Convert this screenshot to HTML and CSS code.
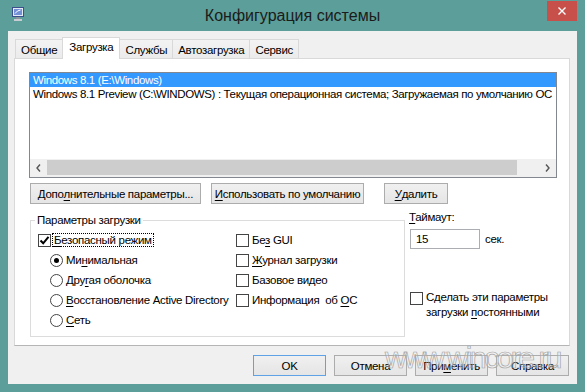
FILE: index.html
```html
<!DOCTYPE html>
<html lang="ru">
<head>
  <meta charset="UTF-8">
  <title>Конфигурация системы</title>
  <link rel="stylesheet" href="styles.css">
</head>
<body>

  <div class="window">
    <div class="titlebar">
      <div class="titlebar-left">
        <svg class="app-icon" viewBox="0 0 12 15">
          <rect x="0.5" y="0.5" width="11" height="9" fill="#e4eaf6" stroke="#3a4f8c"/>
          <rect x="2" y="2" width="8" height="6" fill="#7390d6"/>
          <path d="M3 6.5 L5.5 4 L8.5 3" stroke="#fff" fill="none"/>
          <rect x="4" y="10" width="4" height="2" fill="#8c939c"/>
          <rect x="2" y="12" width="8" height="2" fill="#c9cdd3"/>
        </svg>
      </div>
      <div class="title">Конфигурация системы</div>
      <div class="titlebar-right">
        <div class="close-btn">
          <svg width="8" height="8" viewBox="0 0 8 8">
            <path d="M0.5 0.5 L7.5 7.5 M7.5 0.5 L0.5 7.5" stroke="#fff" stroke-width="1.4"/>
          </svg>
        </div>
      </div>
    </div>

    <div class="client">
      <div class="tabs">
        <div class="tab">Общие</div>
        <div class="tab active">Загрузка</div>
        <div class="tab">Службы</div>
        <div class="tab">Автозагрузка</div>
        <div class="tab">Сервис</div>
      </div>

      <div class="panel">
        <div class="listbox">
          <div class="list-rows">
            <div class="list-row selected">Windows 8.1 (E:\Windows)</div>
            <div class="list-row">Windows 8.1 Preview (C:\WINDOWS) : Текущая операционная система; Загружаемая по умолчанию ОС</div>
          </div>
          <div class="hscroll">
            <div class="scroll-arrow">
              <svg width="5" height="8" viewBox="0 0 5 8"><path d="M4 0.5 L1 4 L4 7.5" stroke="#555" stroke-width="1.4" fill="none"/></svg>
            </div>
            <div class="scroll-thumb"></div>
            <div class="scroll-track"></div>
            <div class="scroll-arrow">
              <svg width="5" height="8" viewBox="0 0 5 8"><path d="M1 0.5 L4 4 L1 7.5" stroke="#555" stroke-width="1.4" fill="none"/></svg>
            </div>
          </div>
        </div>

        <div class="btn-row">
          <div class="btn btn-advanced">Допо<u>л</u>нительные параметры...</div>
          <div class="btn btn-default"><u>И</u>спользовать по умолчанию</div>
          <div class="btn btn-delete"><u>У</u>далить</div>
        </div>

        <div class="lower">
          <fieldset class="group">
            <legend>Параметры загрузки</legend>
            <div class="group-grid">
              <div class="opt">
                <span class="chk checked">
                  <svg width="11" height="11" viewBox="0 0 11 11"><path d="M1.5 5.5 L4.2 8.3 L9.5 1.8" stroke="#000" stroke-width="2" fill="none"/></svg>
                </span>
                <span class="opt-text focused"><u>Б</u>езопасный режим</span>
              </div>
              <div class="opt">
                <span class="chk"></span>
                <span class="opt-text">Бе<u>з</u> GUI</span>
              </div>
              <div class="opt indent">
                <span class="radio on"></span>
                <span class="opt-text">Ми<u>н</u>имальная</span>
              </div>
              <div class="opt">
                <span class="chk"></span>
                <span class="opt-text"><u>Ж</u>урнал загрузки</span>
              </div>
              <div class="opt indent">
                <span class="radio"></span>
                <span class="opt-text">Дру<u>г</u>ая оболочка</span>
              </div>
              <div class="opt">
                <span class="chk"></span>
                <span class="opt-text">Базовое видео</span>
              </div>
              <div class="opt indent">
                <span class="radio"></span>
                <span class="opt-text"><u>В</u>осстановление Active Directory</span>
              </div>
              <div class="opt">
                <span class="chk"></span>
                <span class="opt-text">Информация&nbsp; об <u>О</u>С</span>
              </div>
              <div class="opt indent">
                <span class="radio"></span>
                <span class="opt-text"><u>С</u>еть</span>
              </div>
            </div>
          </fieldset>

          <div class="side">
            <div class="side-label"><u>Т</u>аймаут:</div>
            <div class="timeout-row">
              <div class="input">15</div>
              <div class="unit">сек.</div>
            </div>
            <div class="persist">
              <span class="chk"></span>
              <div class="persist-text">Сделать эти параметры<br>загрузки <u>п</u>остоянными</div>
            </div>
          </div>
        </div>
      </div>

      <div class="footer">
        <div class="btn default">OK</div>
        <div class="btn">Отмена</div>
        <div class="btn">При<u>м</u>енить</div>
        <div class="btn">Справка</div>
      </div>
    </div>

    <div class="watermark">www.wincore.ru</div>
  </div>

</body>
</html>
```

FILE: styles.css
```css
* {
  box-sizing: border-box;
}

body {
  margin: 0;
  background: #5c9e99;
  font-family: "Liberation Sans", Arial, sans-serif;
  font-size: 11.5px;
  letter-spacing: -0.3px;
  color: #000;
}

u {
  text-decoration-thickness: 1px;
  text-underline-offset: 2px;
}

.window {
  position: relative;
  width: 585px;
  height: 392px;
  background: #5c9e99;
}

/* заголовок окна */
.titlebar {
  height: 31px;
  display: grid;
  grid-template-columns: 1fr auto 1fr;
}

.titlebar-left {
  padding: 7px 0 0 12px;
}

.app-icon {
  display: block;
  width: 12px;
  height: 15px;
}

.title {
  font-size: 16px;
  letter-spacing: 0;
  line-height: 31px;
  color: #1b1b1b;
}

.titlebar-right {
  display: flex;
  justify-content: flex-end;
  align-items: flex-start;
  padding: 1px 8px 0 0;
}

.close-btn {
  width: 30px;
  height: 20px;
  background: #c7504b;
  display: flex;
  align-items: center;
  justify-content: center;
}

.client {
  margin: 0 8px;
  height: 353px;
  background: #f0f0f0;
  padding: 6px 7px 0 6px;
}

/* вкладки */
.tabs {
  display: flex;
  align-items: flex-start;
  height: 22px;
  padding-left: 1px;
  position: relative;
  z-index: 1;
}

.tab {
  height: 19px;
  margin-top: 2px;
  margin-left: -1px;
  padding: 3px 5px 0;
  line-height: 15px;
  border: 1px solid #d9d9d9;
  border-bottom: none;
  background: linear-gradient(#f3f3f3, #ebebeb);
}

.tab:first-child {
  margin-left: 0;
}

.tab.active {
  height: 22px;
  margin-top: 0;
  padding: 2px 6px 0;
  background: #fff;
  position: relative;
  z-index: 2;
}

.panel {
  margin-top: -1px;
  height: 288px;
  background: #fff;
  border: 1px solid #d9d9d9;
  border-bottom-color: #b5b5b5;
  padding: 13px 12px 0 14px;
}

/* список ОС */
.listbox {
  height: 106px;
  border: 1px solid #828790;
  display: flex;
  flex-direction: column;
}

.list-rows {
  flex: 1;
  overflow: hidden;
}

.list-row {
  height: 14px;
  line-height: 14px;
  padding-left: 3px;
  letter-spacing: -0.36px;
  white-space: nowrap;
}

.list-row.selected {
  background: #3399ff;
  color: #fff;
}

.hscroll {
  height: 18px;
  display: flex;
  background: #f0f0f0;
}

.scroll-arrow {
  width: 17px;
  display: flex;
  align-items: center;
  justify-content: center;
}

.scroll-thumb {
  width: 470px;
  margin: 1px 0 2px;
  background: #cdcdcd;
}

.scroll-track {
  flex: 1;
}

/* кнопки */
.btn {
  height: 21px;
  border: 1px solid #acacac;
  background: linear-gradient(#f0f0f0, #e5e5e5);
  display: flex;
  align-items: center;
  justify-content: center;
  white-space: nowrap;
}

.btn.default {
  border-color: #5fa3e6;
}

.btn-row {
  display: flex;
  margin-top: 5px;
  padding-left: 1px;
}

.btn-advanced {
  width: 171px;
}

.btn-default {
  width: 153px;
  margin-left: 10px;
}

.btn-delete {
  width: 64px;
  margin-left: 20px;
}

/* параметры загрузки */
.lower {
  display: flex;
  align-items: flex-start;
  margin-top: 6px;
  padding-left: 1px;
}

.group {
  margin: 3px 0 0;
  width: 375px;
  min-width: 0;
  border: 1px solid #dcdcdc;
  padding: 2px 6px 6px 7px;
}

.group legend {
  padding: 0 2px;
  margin-left: -3px;
  line-height: 15px;
}

.group-grid {
  display: grid;
  grid-template-columns: 198px 1fr;
  grid-auto-rows: 20px;
}

.opt {
  display: flex;
  align-items: center;
  white-space: nowrap;
}

.opt.indent {
  padding-left: 12px;
}

.chk,
.radio {
  flex: none;
  width: 13px;
  height: 13px;
  border: 1px solid #444;
  background: #fff;
  margin-right: 1px;
  display: flex;
  align-items: center;
  justify-content: center;
}

.radio {
  border-radius: 50%;
}

.radio.on::after {
  content: "";
  width: 5px;
  height: 5px;
  border-radius: 50%;
  background: #000;
}

.opt-text {
  line-height: 12px;
  padding: 0 1px;
  border: 1px solid transparent;
}

.opt-text.focused {
  border: 1px dotted #000;
}

.side {
  margin-left: 4px;
}

.side-label {
  line-height: 15px;
}

.timeout-row {
  display: flex;
  align-items: center;
  margin-top: 4px;
}

.input {
  width: 70px;
  height: 20px;
  margin-left: 1px;
  border: 1px solid #abadb3;
  background: #fff;
  padding-left: 5px;
  line-height: 18px;
}

.unit {
  margin-left: 5px;
}

.persist {
  display: flex;
  align-items: flex-start;
  margin-top: 41px;
  margin-left: 1px;
}

.persist .chk {
  margin-top: 2px;
  margin-right: 3px;
}

.persist-text {
  line-height: 15px;
  white-space: nowrap;
}

.footer {
  display: flex;
  justify-content: flex-end;
  gap: 8px;
  margin-top: 9px;
  padding-right: 1px;
}

.footer .btn {
  width: 73px;
}

.watermark {
  position: absolute;
  left: 385px;
  top: 343px;
  font-size: 30px;
  line-height: 30px;
  letter-spacing: -2.5px;
  color: rgba(255, 255, 255, 0.2);
  -webkit-text-stroke: 0.7px #a5a5a5;
  pointer-events: none;
}
```
